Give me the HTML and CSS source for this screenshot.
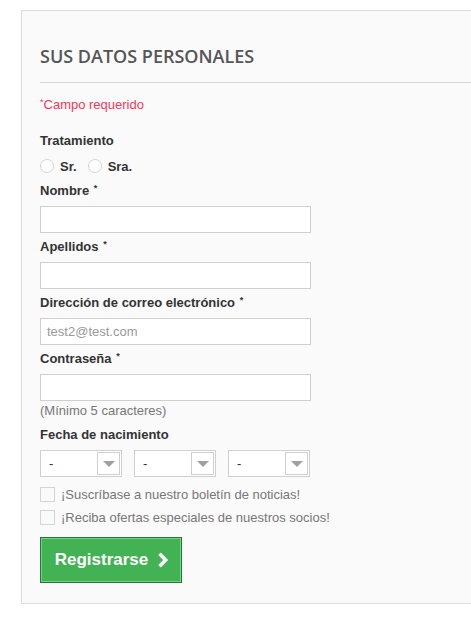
FILE: index.html
```
<!DOCTYPE html>
<html lang="es">
<head>
<meta charset="utf-8">
<title>Sus datos personales</title>
<link rel="stylesheet" href="styles.css">
</head>
<body>
<div class="panel">
  <h1 class="title">SUS DATOS PERSONALES</h1>
  <p class="required-note"><sup>*</sup>Campo requerido</p>

  <div class="label">Tratamiento</div>
  <div class="radios">
    <label class="radio"><span class="radio-dot"></span>Sr.</label>
    <label class="radio"><span class="radio-dot"></span>Sra.</label>
  </div>

  <div class="group">
    <div class="label">Nombre <sup>*</sup></div>
    <div class="input"></div>
  </div>
  <div class="group">
    <div class="label">Apellidos <sup>*</sup></div>
    <div class="input"></div>
  </div>
  <div class="group">
    <div class="label">Dirección de correo electrónico <sup>*</sup></div>
    <div class="input placeholder">test2@test.com</div>
  </div>
  <div class="group nogap">
    <div class="label">Contraseña <sup>*</sup></div>
    <div class="input"></div>
  </div>
  <div class="hint">(Mínimo 5 caracteres)</div>

  <div class="label date-label">Fecha de nacimiento</div>
  <div class="selects">
    <div class="select"><span>-</span><span class="arrow"></span></div>
    <div class="select"><span>-</span><span class="arrow"></span></div>
    <div class="select"><span>-</span><span class="arrow"></span></div>
  </div>

  <label class="check"><span class="box"></span>¡Suscríbase a nuestro boletín de noticias!</label>
  <label class="check"><span class="box"></span>¡Reciba ofertas especiales de nuestros socios!</label>

  <button class="btn" type="button">Registrarse
    <svg class="chev" width="12" height="16" viewBox="0 0 12 16"><path d="M2.5 1.8 L8.7 8 L2.5 14.2" fill="none" stroke="#fff" stroke-width="3.6" stroke-linejoin="miter"/></svg>
  </button>
</div>
</body>
</html>
```

FILE: styles.css
```
html, body {
  margin: 0;
  padding: 0;
  background: #fff;
  overflow: hidden;
}
body {
  font-family: "Liberation Sans", Arial, sans-serif;
  font-size: 13px;
  color: #333;
}
.panel {
  margin: 10px 0 0 21px;
  border: 1px solid #dcdcdc;
  border-right: none;
  background: #fafafa;
  padding: 0 0 19px 18px;
  height: 573px;
  box-sizing: content-box;
}
.title {
  margin: 0;
  padding: 33px 0 14px 0;
  font-family: "Open Sans", sans-serif;
  font-weight: 600;
  font-size: 18px;
  line-height: 24px;
  color: #555;
  border-bottom: 1px solid #d6d6d6;
}
.required-note {
  margin: 13px 0 18px;
  line-height: 18px;
  color: #f2385a;
}
sup {
  font-size: 9px;
  line-height: 0;
  vertical-align: 4px;
}
.label {
  font-weight: bold;
  line-height: 18px;
  margin-bottom: 7px;
  color: #333;
}
.group .label {
  margin-bottom: 6px;
}
.label.date-label {
  margin-bottom: 6px;
}
.label sup {
  margin-left: 1px;
}
.radios {
  display: flex;
  gap: 11px;
  height: 18px;
  align-items: center;
  margin-bottom: 7px;
}
.radio {
  display: flex;
  align-items: center;
  font-weight: bold;
}
.radio-dot {
  width: 12px;
  height: 12px;
  border: 1px solid #d4d4d4;
  border-radius: 50%;
  background: #fff;
  margin-right: 6px;
}
.group {
  margin-bottom: 5px;
}
.group.nogap {
  margin-bottom: 0;
}
.input {
  height: 25px;
  border: 1px solid #d0d0d0;
  background: #fff;
  line-height: 25px;
  padding-left: 6px;
  box-sizing: content-box;
  width: 263px;
}
.input.placeholder {
  color: #999;
}
.hint {
  line-height: 18px;
  color: #777;
  margin-top: 1px;
  margin-bottom: 6px;
}
.selects {
  display: flex;
  gap: 12px;
  margin-bottom: 8px;
}
.select {
  width: 82px;
  height: 27px;
  box-sizing: border-box;
  border: 1px solid #d0d0d0;
  background: #fff;
  display: flex;
  align-items: center;
  justify-content: space-between;
  padding-left: 8px;
  padding-right: 1px;
}
.arrow {
  width: 23px;
  height: 23px;
  box-sizing: border-box;
  border: 1px solid #d0d0d0;
  background: #fff;
  position: relative;
}
.arrow::after {
  content: "";
  position: absolute;
  left: 5px;
  top: 8px;
  border-left: 6px solid transparent;
  border-right: 6px solid transparent;
  border-top: 6px solid #a0a0a0;
}
.check {
  display: flex;
  align-items: center;
  height: 18px;
  margin-bottom: 5px;
  color: #777;
}
.box {
  width: 13px;
  height: 13px;
  border: 1px solid #d4d4d4;
  background: #fafafa;
  margin-right: 6px;
}
.btn {
  margin-top: 11px;
  width: 142px;
  height: 46px;
  box-sizing: border-box;
  background: #42b254;
  border: 1px solid #1f7a32;
  box-shadow: inset 0 0 0 1px #7ccf88;
  color: #fff;
  font-family: "Liberation Sans", Arial, sans-serif;
  font-weight: bold;
  font-size: 17px;
  display: flex;
  align-items: center;
  justify-content: center;
  gap: 9px;
  padding: 0 0 0 2px;
}
.chev {
  display: block;
}
```
